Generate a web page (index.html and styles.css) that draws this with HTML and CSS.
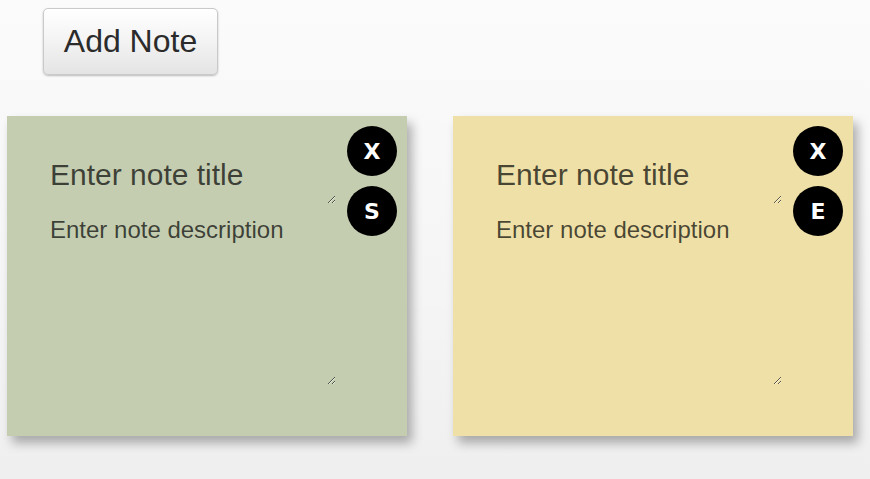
FILE: index.html
```html
<!DOCTYPE html>
<html>
<head>
<meta charset="utf-8">
<link rel="stylesheet" href="styles.css">
</head>
<body>
<div class="page">
  <button class="add-btn">Add Note</button>
  <div class="notes">
    <div class="note note-green">
      <textarea class="note-title">Enter note title</textarea>
      <textarea class="note-desc">Enter note description</textarea>
      <span class="circle circle-top">X</span>
      <span class="circle circle-second">S</span>
    </div>
    <div class="note note-yellow">
      <textarea class="note-title">Enter note title</textarea>
      <textarea class="note-desc">Enter note description</textarea>
      <span class="circle circle-top">X</span>
      <span class="circle circle-second">E</span>
    </div>
  </div>
</div>
</body>
</html>
```
FILE: styles.css
```css
html, body {
  margin: 0;
  height: 100%;
}
body {
  background: linear-gradient(to bottom, #fbfbfb 0%, #f5f5f5 60%, #efefef 100%);
  font-family: "Liberation Sans", Arial, Helvetica, sans-serif;
  overflow: hidden;
}
.page {
  padding: 8px 0 0 7px;
}
.add-btn {
  display: block;
  margin-left: 36px;
  width: 175px;
  height: 67px;
  box-sizing: border-box;
  font-family: "Liberation Sans", Arial, sans-serif;
  font-size: 32px;
  color: #2b2b2b;
  background: linear-gradient(to bottom, #ffffff 0%, #f3f3f3 50%, #e4e4e4 100%);
  border: 1px solid #c9c9c9;
  border-radius: 5px;
  box-shadow: 0 1px 2px rgba(0,0,0,0.25);
  padding: 0;
}
.notes {
  display: flex;
  gap: 46px;
  margin-top: 41px;
}
.note {
  position: relative;
  width: 400px;
  height: 320px;
  box-sizing: border-box;
  padding: 36px 0 0 43px;
  display: flex;
  flex-direction: column;
  box-shadow: 5px 7px 10px rgba(0,0,0,0.3);
}
.note-green { background: #c5cdb0; }
.note-yellow { background: #efe0a7; }
.note textarea {
  display: block;
  box-sizing: border-box;
  width: 286px;
  padding: 0;
  margin: 0;
  border: none;
  outline: none;
  background: transparent;
  font-family: "Liberation Sans", Arial, sans-serif;
  color: rgba(0,0,0,0.7);
  overflow: hidden;
}
.note .note-title {
  font-size: 30px;
  height: 52px;
  padding-top: 6px;
}
.note .note-desc {
  font-size: 24px;
  height: 169px;
  margin-top: 12px;
}
.circle {
  position: absolute;
  right: 10px;
  width: 50px;
  height: 50px;
  border-radius: 50%;
  background: #000;
  color: #fff;
  font-family: "DejaVu Sans", "Liberation Sans", sans-serif;
  font-weight: bold;
  font-size: 22px;
  display: flex;
  align-items: center;
  justify-content: center;
}
.circle-top { top: 10px; }
.circle-second { top: 70px; }
```
